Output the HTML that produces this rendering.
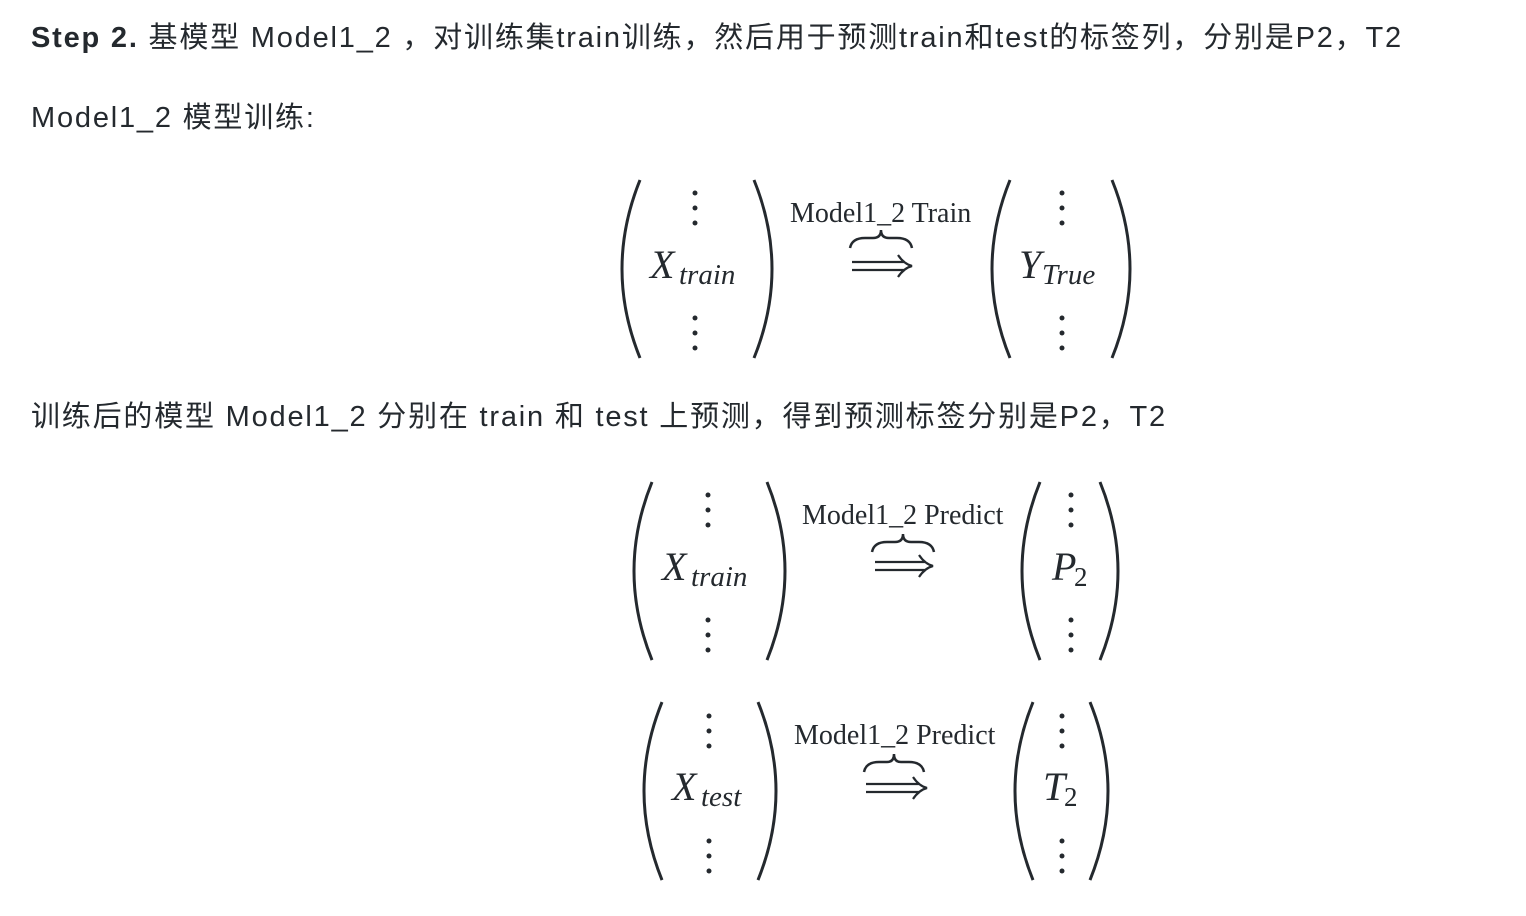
<!DOCTYPE html>
<html><head><meta charset="utf-8"><style>
body{margin:0;width:1526px;height:916px;background:#fff;position:relative;overflow:hidden;color:#24292e;font-family:"Liberation Sans","Noto Sans CJK SC",sans-serif;}
.t{position:absolute;left:31px;font-size:29px;letter-spacing:1.8px;white-space:nowrap;line-height:1;}
svg{position:absolute;left:0;top:0}
.m{font-family:"Liberation Serif",serif;fill:#24292e}
</style></head><body>
<div class="t" style="top:24px"><b>Step 2.</b> 基模型 Model1_2 ，对训练集train训练，然后用于预测train和test的标签列，分别是P2，T2</div>
<div class="t" style="top:104px">Model1_2 模型训练:</div>
<div class="t" style="top:403px">训练后的模型 Model1_2 分别在 train 和 test 上预测，得到预测标签分别是P2，T2</div>
<svg width="1526" height="916" fill="none" stroke="#24292e" stroke-width="3">
<g>
<path d="M640,180 Q604,269 640,358"/><path d="M754,180 Q790,269 754,358"/>
<path d="M1010,180 Q974,269 1010,358"/><path d="M1112,180 Q1148,269 1112,358"/>
<path d="M850,248 q2,-10 15,-10 h8 q8,0 8,-8 q0,8 8,8 h8 q13,0 15,10" stroke-width="2.5"/>
<path d="M852,262 H905 M852,270 H905 M898,255 Q904,264 912,266 Q904,268 898,277" stroke-width="2.2"/>
</g>
<g>
<path d="M652,482 Q616,571 652,660"/><path d="M767,482 Q803,571 767,660"/>
<path d="M1040,482 Q1004,571 1040,660"/><path d="M1100,482 Q1136,571 1100,660"/>
<path d="M872,552 q2,-10 15,-10 h8 q8,0 8,-8 q0,8 8,8 h8 q13,0 15,10" stroke-width="2.5"/>
<path d="M875,562 H926 M875,570 H926 M919,555 Q925,564 933,566 Q925,568 919,577" stroke-width="2.2"/>
</g>
<g>
<path d="M662,702 Q626,791 662,880"/><path d="M758,702 Q794,791 758,880"/>
<path d="M1033,702 Q997,791 1033,880"/><path d="M1090,702 Q1126,791 1090,880"/>
<path d="M864,772 q2,-10 15,-10 h8 q7,0 7,-8 q0,8 7,8 h8 q13,0 15,10" stroke-width="2.5"/>
<path d="M866,784 H920 M866,792 H920 M913,777 Q919,786 927,788 Q919,790 913,799" stroke-width="2.2"/>
</g>
<g fill="#24292e" stroke="none">
<circle cx="695" cy="193" r="2.5"/><circle cx="695" cy="208" r="2.5"/><circle cx="695" cy="223" r="2.5"/>
<circle cx="695" cy="318" r="2.5"/><circle cx="695" cy="333" r="2.5"/><circle cx="695" cy="348" r="2.5"/>
<circle cx="1062" cy="193" r="2.5"/><circle cx="1062" cy="208" r="2.5"/><circle cx="1062" cy="223" r="2.5"/>
<circle cx="1062" cy="318" r="2.5"/><circle cx="1062" cy="333" r="2.5"/><circle cx="1062" cy="348" r="2.5"/>
<circle cx="708" cy="495" r="2.5"/><circle cx="708" cy="510" r="2.5"/><circle cx="708" cy="525" r="2.5"/>
<circle cx="708" cy="620" r="2.5"/><circle cx="708" cy="635" r="2.5"/><circle cx="708" cy="650" r="2.5"/>
<circle cx="1071" cy="495" r="2.5"/><circle cx="1071" cy="510" r="2.5"/><circle cx="1071" cy="525" r="2.5"/>
<circle cx="1071" cy="620" r="2.5"/><circle cx="1071" cy="635" r="2.5"/><circle cx="1071" cy="650" r="2.5"/>
<circle cx="709" cy="716" r="2.5"/><circle cx="709" cy="731" r="2.5"/><circle cx="709" cy="746" r="2.5"/>
<circle cx="709" cy="841" r="2.5"/><circle cx="709" cy="856" r="2.5"/><circle cx="709" cy="871" r="2.5"/>
<circle cx="1062" cy="716" r="2.5"/><circle cx="1062" cy="731" r="2.5"/><circle cx="1062" cy="746" r="2.5"/>
<circle cx="1062" cy="841" r="2.5"/><circle cx="1062" cy="856" r="2.5"/><circle cx="1062" cy="871" r="2.5"/>
</g>
<g class="m" stroke="none" font-style="italic">
<text x="650" y="278" font-size="40">X</text><text x="679" y="284" font-size="29">train</text>
<text x="1019" y="278" font-size="40">Y</text><text x="1042" y="284" font-size="29">True</text>
<text x="662" y="580" font-size="40">X</text><text x="691" y="586" font-size="29">train</text>
<text x="1052" y="580" font-size="40">P</text><text x="1074" y="586" font-size="27" font-style="normal">2</text>
<text x="672" y="800" font-size="40">X</text><text x="701" y="806" font-size="29">test</text>
<text x="1043" y="800" font-size="40">T</text><text x="1064" y="806" font-size="27" font-style="normal">2</text>
</g>
<g class="m" stroke="none" font-size="28">
<text x="790" y="222">Model1_2 Train</text>
<text x="802" y="524">Model1_2 Predict</text>
<text x="794" y="744">Model1_2 Predict</text>
</g>
</svg>
</body></html>
